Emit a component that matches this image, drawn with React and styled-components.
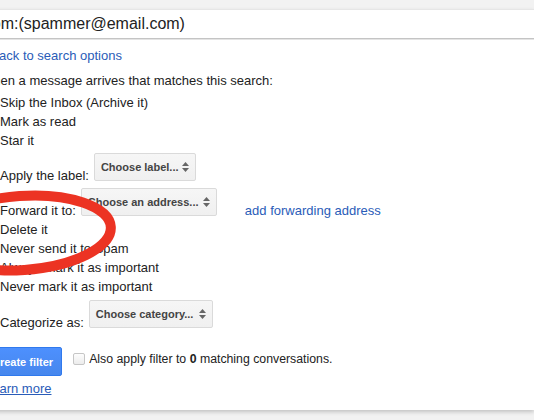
import React from 'react'
import styled, { createGlobalStyle } from 'styled-components'

const GlobalStyle = createGlobalStyle`
  html, body {
    margin: 0;
    padding: 0;
    background: #f2f2f2;
  }
  body {
    font-family: "Liberation Sans", Arial, sans-serif;
    color: #222;
  }
`

const Viewport = styled.div`
  position: relative;
  width: 534px;
  height: 420px;
  overflow: hidden;
  background: #f2f2f2;
`

const TopBar = styled.div`
  height: 9px;
  background: #f2f2f2;
`

const Panel = styled.div`
  width: calc(100% + 19px);
  margin-left: -19px;
  height: 401px;
  box-sizing: border-box;
  background: #fff;
  border-top: 1px solid #e6e6e6;
  box-shadow: 0 2px 4px rgba(0, 0, 0, 0.2);
`

const SearchRow = styled.div`
  height: 28px;
  line-height: 28px;
  padding-left: 1px;
  font-size: 16px;
  color: #222;
  border-bottom: 1px solid #c4c4c4;
  box-shadow: 0 1px 0 #e4e4e4;
`

const Body = styled.div`
  padding: 7px 0 10px 0;
  font-size: 13px;
  line-height: 19px;
`

const Link = styled.a`
  color: #2a5cb8;
  text-decoration: none;
  cursor: pointer;
`

const Intro = styled.div`
  margin-top: 6px;
`

const Options = styled.div`
  margin-top: 3px;
  display: flex;
  flex-direction: column;
`

const Option = styled.div`
  display: flex;
  align-items: ${p => (p.$withSelect ? 'flex-end' : 'center')};
  margin-top: ${p => p.$gap || 0}px;
  white-space: nowrap;
`

const Check = styled.span`
  flex: none;
  width: 12px;
  height: 12px;
  margin-right: ${p => p.$right ?? 7}px;
  box-sizing: border-box;
  border: 1px solid #c6c6c6;
  border-radius: 2px;
  background: linear-gradient(#fdfdfd, #ececec);
  align-self: center;
`

const Label = styled.span`
  line-height: 19px;
`

const Select = styled.div`
  display: flex;
  align-items: center;
  justify-content: space-between;
  box-sizing: border-box;
  width: ${p => p.$width}px;
  height: 28px;
  margin: 0 0 4px 5px;
  padding: 0 6px 0 6px;
  border: 1px solid #dadada;
  border-radius: 2px;
  background: linear-gradient(#f6f6f6, #f0f0f0);
  color: #444;
  font-size: 11px;
  font-weight: bold;
  line-height: 1;
`

const Arrows = () => (
  <svg width="7" height="10" viewBox="0 0 7 10">
    <polygon points="0,4 3.5,0 7,4" fill="#666" />
    <polygon points="0,6 3.5,10 7,6" fill="#666" />
  </svg>
)

const SideLink = styled(Link)`
  margin-left: 28px;
`

const Footer = styled.div`
  display: flex;
  align-items: center;
  margin-top: 15px;
`

const Button = styled.button`
  height: 29px;
  margin-left: 2px;
  padding: 0 8px;
  border: 1px solid #3079ed;
  border-radius: 2px;
  background: linear-gradient(#4d90fe, #4787ed);
  color: #fff;
  font-family: inherit;
  font-size: 11px;
  font-weight: bold;
`

const ApplyText = styled.span`
  margin-left: 11px;
  display: flex;
  align-items: center;
  margin-bottom: 5px;
  font-size: 12.3px;
`

const LearnMore = styled(Link)`
  display: inline-block;
  margin: 3px 0 0 4px;
  text-decoration: underline;
`

const Circle = styled.svg`
  position: absolute;
  left: 0;
  top: 180px;
  pointer-events: none;
`

const simpleOptions = ['Delete it', 'Never send it to Spam', 'Always mark it as important', 'Never mark it as important']

export default function App() {
  return (
    <Viewport>
      <GlobalStyle />
      <TopBar />
      <Panel>
        <SearchRow>from:(spammer@email.com)</SearchRow>
        <Body>
          <Link>« back to search options</Link>
          <Intro>When a message arrives that matches this search:</Intro>
          <Options>
            <Option><Check /><Label>Skip the Inbox (Archive it)</Label></Option>
            <Option><Check /><Label>Mark as read</Label></Option>
            <Option><Check /><Label>Star it</Label></Option>
            <Option $withSelect $gap={3}>
              <Check /><Label>Apply the label:</Label>
              <Select $width={102}>Choose label... <Arrows /></Select>
            </Option>
            <Option $withSelect $gap={3}>
              <Check /><Label>Forward it to:</Label>
              <Select $width={136}>Choose an address... <Arrows /></Select>
              <SideLink>add forwarding address</SideLink>
            </Option>
            {simpleOptions.map(o => (
              <Option key={o}><Check /><Label>{o}</Label></Option>
            ))}
            <Option $withSelect $gap={4}>
              <Check /><Label>Categorize as:</Label>
              <Select $width={124}>Choose category... <Arrows /></Select>
            </Option>
          </Options>
          <Footer>
            <Button>Create filter</Button>
            <ApplyText>
              <Check $right={4} />
              <span>Also apply filter to <b>0</b> matching conversations.</span>
            </ApplyText>
          </Footer>
          <LearnMore>Learn more</LearnMore>
        </Body>
      </Panel>
      <Circle width="140" height="110" viewBox="0 0 140 110">
        <ellipse cx="22" cy="53" rx="89" ry="37" fill="none" stroke="#ec3323" strokeWidth="10" transform="rotate(-4 22 53)" />
      </Circle>
    </Viewport>
  )
}
